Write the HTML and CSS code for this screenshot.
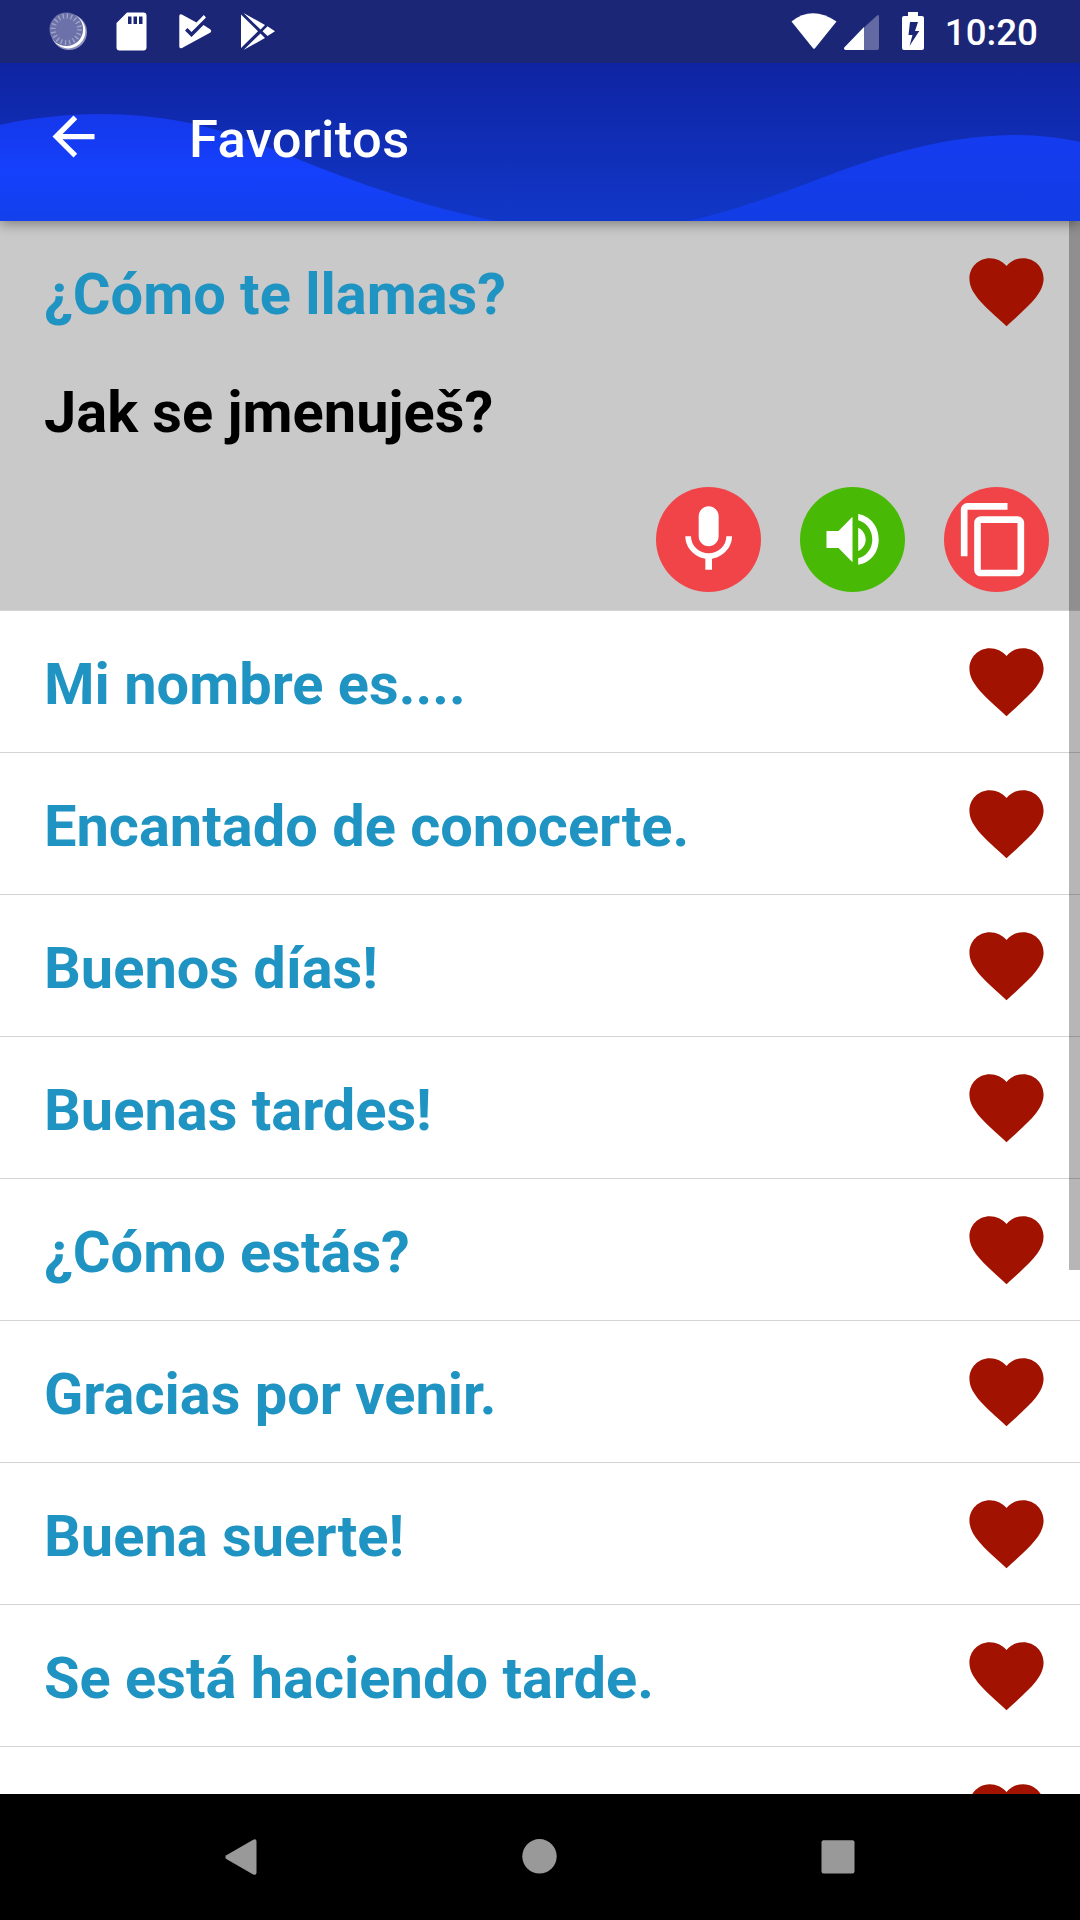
FILE: index.html
```html
<!DOCTYPE html>
<html lang="es">
<head>
<meta charset="utf-8">
<title>Favoritos</title>
<link rel="stylesheet" href="styles.css">
</head>
<body>
<svg class="defs" aria-hidden="true">
  <symbol id="heart" viewBox="0 0 24 24"><path d="M12 21.35l-1.45-1.32C5.4 15.36 2 12.28 2 8.5 2 5.42 4.42 3 7.5 3c1.74 0 3.41.81 4.5 2.09C13.09 3.81 14.76 3 16.5 3 19.58 3 22 5.42 22 8.5c0 3.78-3.4 6.86-8.55 11.54L12 21.35z"/></symbol>
</svg>
<div class="screen">
  <header class="status">
    <svg class="status-left" width="300" height="63" viewBox="0 0 300 63" fill="#fff">
      <circle cx="69" cy="32" r="18" fill="#8e93bd"/>
      <circle cx="68.2" cy="31.2" r="17.2"/>
      <circle cx="66.3" cy="29.3" r="16.8" fill="#6c72a9"/>
      <circle cx="66.3" cy="29.3" r="13.2" fill="none" stroke="#a0a4c8" stroke-width="5" stroke-dasharray="1.3 2.847"/>
      <path d="M127 12.5h16.500a3 3 0 0 1 3 3v32a3 3 0 0 1-3 3h-24a3 3 0 0 1-3-3v-24.500zM128 16.500v7.500h3.500v-7.500zM133.500 16.500v7.500h3.500v-7.500zM139 16.500v7.500h3.500v-7.500z" fill-rule="evenodd"/>
      <path d="M179.300 16q0-2.300 2.500-1.500l14.700 8L203.800 15l2.200 2.500-14.500 14.500-4-4-2.500 2.500 6.500 6.500 12-12 7 4.500q1.500 1.500 0 3L182 48q-2.700 1-2.700-1.500z"/>
      <path d="M241 14.500l17 16.700-17 16.800zM243.500 13l21.500 12-4.500 4.500zM243.500 50l21.500-12-4.500-4.500zM267.500 26.300l7.500 4.900-7.500 4.900-5-4.900z"/>
    </svg>
    <div class="status-right">
      <svg width="140" height="63" viewBox="785 0 140 63" fill="#fff">
        <path d="M791.500 21.500Q812 5 836.500 21.500L815 48.200q-1 1.200-2 0z"/>
        <path d="M864 27.500L877 15.500q2-1.500 2 1V48q0 2-2 2h-13z" fill="#636aa3"/>
        <path d="M864 27v23h-18.500q-2.500-.5-1-2.700z"/>
        <path d="M908 12h10v4h4q2 0 2 2v30q0 2-2 2h-18q-2 0-2-2V18q0-2 2-2h4zM910 22l-1.500 13h4L909.500 46l9.800-15H915l3-9z" fill-rule="evenodd"/>
      </svg>
      <span class="clock">10:20</span>
    </div>
  </header>

  <div class="appbar">
    <svg class="wave" width="1080" height="158" viewBox="0 63 1080 158">
      <defs>
        <linearGradient id="w" x1="0" y1="114" x2="0" y2="221" gradientUnits="userSpaceOnUse">
          <stop offset="0" stop-color="#1538ea"/><stop offset=".55" stop-color="#1540fc"/><stop offset="1" stop-color="#1340ec"/>
        </linearGradient>
        <linearGradient id="w2" x1="0" y1="135" x2="0" y2="221" gradientUnits="userSpaceOnUse">
          <stop offset="0" stop-color="#153bf0"/><stop offset="1" stop-color="#123de4"/>
        </linearGradient>
      </defs>
      <path fill="url(#w)" d="M0 125C30 118 65 114 100 114C180 114 235 133 300 160C360 184 425 207 495 221H0z"/>
      <path fill="url(#w2)" d="M688 221C740 210 800 186 840 171C900 149 960 135 1016 135C1040 135 1062 138 1080 142V221z"/>
    </svg>
    <svg class="back" width="63" height="63" viewBox="0 0 24 24" fill="#fff"><path d="M20 11H7.830l5.590-5.590L12 4l-8 8 8 8 1.410-1.410L7.830 13H20v-2z"/></svg>
    <h1 class="title">Favoritos</h1>
  </div>

  <main class="list">
    <section class="item open">
      <div class="row"><span class="phrase">¿Cómo te llamas?</span><svg class="heart"><use href="#heart"/></svg></div>
      <p class="translation">Jak se jmenuješ?</p>
      <div class="actions">
        <span class="btn red"><svg width="80" height="80" viewBox="0.100 0.100 24 24"><path d="M12 14c1.660 0 2.990-1.340 2.990-3L15 5c0-1.660-1.340-3-3-3S9 3.340 9 5v6c0 1.660 1.340 3 3 3zm5.300-3c0 3-2.540 5.100-5.300 5.100S6.700 14 6.700 11H5c0 3.410 2.720 6.230 6 6.720V21h2v-3.280c3.280-.48 6-3.300 6-6.720h-1.700z"/></svg></span>
        <span class="btn green"><svg width="105" height="105" viewBox="0 0 105 105"><path d="M26.500 44h12L52.500 29.700v45.600L38.500 61h-12zM58.200 40.700C63 43 65.700 47.500 65.700 52.400S63 61.800 58.200 64zM58.200 27C70 29 78.700 39 78.700 52.400S70 75.800 58.200 77.700V71.300C67 69 72.300 61 72.300 52.400S67 35.800 58.200 33.300z"/></svg></span>
        <span class="btn red"><svg width="80" height="80" viewBox="0.850 0.100 24 24"><path d="M16 1H4c-1.100 0-2 .9-2 2v14h2V3h12V1zm3 4H8c-1.100 0-2 .9-2 2v14c0 1.100.9 2 2 2h11c1.100 0 2-.9 2-2V7c0-1.100-.9-2-2-2zm0 16H8V7h11v14z"/></svg></span>
      </div>
    </section>
    <section class="item row"><span class="phrase">Mi nombre es....</span><svg class="heart"><use href="#heart"/></svg></section>
    <section class="item row"><span class="phrase">Encantado de conocerte.</span><svg class="heart"><use href="#heart"/></svg></section>
    <section class="item row"><span class="phrase">Buenos días!</span><svg class="heart"><use href="#heart"/></svg></section>
    <section class="item row"><span class="phrase">Buenas tardes!</span><svg class="heart"><use href="#heart"/></svg></section>
    <section class="item row"><span class="phrase">¿Cómo estás?</span><svg class="heart"><use href="#heart"/></svg></section>
    <section class="item row"><span class="phrase">Gracias por venir.</span><svg class="heart"><use href="#heart"/></svg></section>
    <section class="item row"><span class="phrase">Buena suerte!</span><svg class="heart"><use href="#heart"/></svg></section>
    <section class="item row"><span class="phrase">Se está haciendo tarde.</span><svg class="heart"><use href="#heart"/></svg></section>
    <section class="item row"><span class="phrase"></span><svg class="heart"><use href="#heart"/></svg></section>
    <div class="scrollbar"></div>
  </main>

  <nav class="navbar">
    <svg width="1080" height="126" viewBox="0 1794 1080 126" fill="#999">
      <path d="M226.300 1855.200L252.800 1840q3.700-1.800 3.700 1.500v31q0 3.500-3.700 1.700l-26.500-15.200q-2-1.900 0-3.800z"/>
      <circle cx="539.500" cy="1856.300" r="17.200"/>
      <rect x="821.500" y="1840.300" width="33" height="33.300" rx="2"/>
    </svg>
  </nav>
</div>
</body>
</html>
```
FILE: styles.css
```css
* { box-sizing: border-box; }
body { margin: 0; background: #fff; font-family: Roboto, sans-serif; }
svg { display: block; flex: none; }
.defs { position: absolute; width: 0; height: 0; }

.screen {
  width: 1080px;
  height: 1920px;
  display: flex;
  flex-direction: column;
  overflow: hidden;
}

.status {
  flex: none;
  position: relative;
  z-index: 2;
  height: 63px;
  display: flex;
  justify-content: space-between;
  background: #1b2677;
}
.status-right { display: flex; gap: 20px; padding-right: 42px; }
.clock {
  color: #fff;
  font-size: 36.75px;
  font-weight: 500;
  line-height: 66px;
}

.appbar {
  flex: none;
  position: relative;
  z-index: 1;
  height: 158px;
  display: flex;
  align-items: center;
  padding: 0 0 11px 42px;
  background: linear-gradient(#0f24a2, #1137c8);
  box-shadow: 0 3px 12px rgba(0, 0, 0, .38);
}
.wave { position: absolute; left: 0; top: 0; }
.back { position: relative; }
.title {
  position: relative;
  margin: 4px 0 0 84px;
  color: #fff;
  font-size: 52.5px;
  font-weight: 500;
  letter-spacing: .4px;
  line-height: 62px;
}

.list {
  flex: 1;
  min-height: 0;
  position: relative;
  overflow: hidden;
}
.item { height: 142px; border-bottom: 1px solid #d4d4d4; }
.row {
  display: flex;
  align-items: center;
  justify-content: space-between;
  padding: 0 29px 0 44px;
}
.open { height: 390px; background: #c9c9c9; }
.open .row { height: 141px; }
.phrase,
.translation {
  font-size: 57.75px;
  font-weight: 700;
  line-height: 68px;
}
.phrase { color: #1f93c1; padding-top: 4px; }
.translation { margin: 16px 0 0 44px; color: #000; }
.heart { width: 89px; height: 89px; fill: #a11300; }
.actions {
  display: flex;
  justify-content: flex-end;
  gap: 39px;
  margin-top: 41px;
  padding-right: 31px;
}
.btn {
  width: 105px;
  height: 105px;
  border-radius: 50%;
  display: flex;
  align-items: center;
  justify-content: center;
  fill: #fff;
}
.red { background: #f04449; }
.green { background: #48ba05; }
.scrollbar {
  position: absolute;
  top: 0;
  right: 0;
  width: 11px;
  height: 1049px;
  background: rgba(0, 0, 0, .285);
}

.navbar { flex: none; height: 126px; background: #000; }
```
